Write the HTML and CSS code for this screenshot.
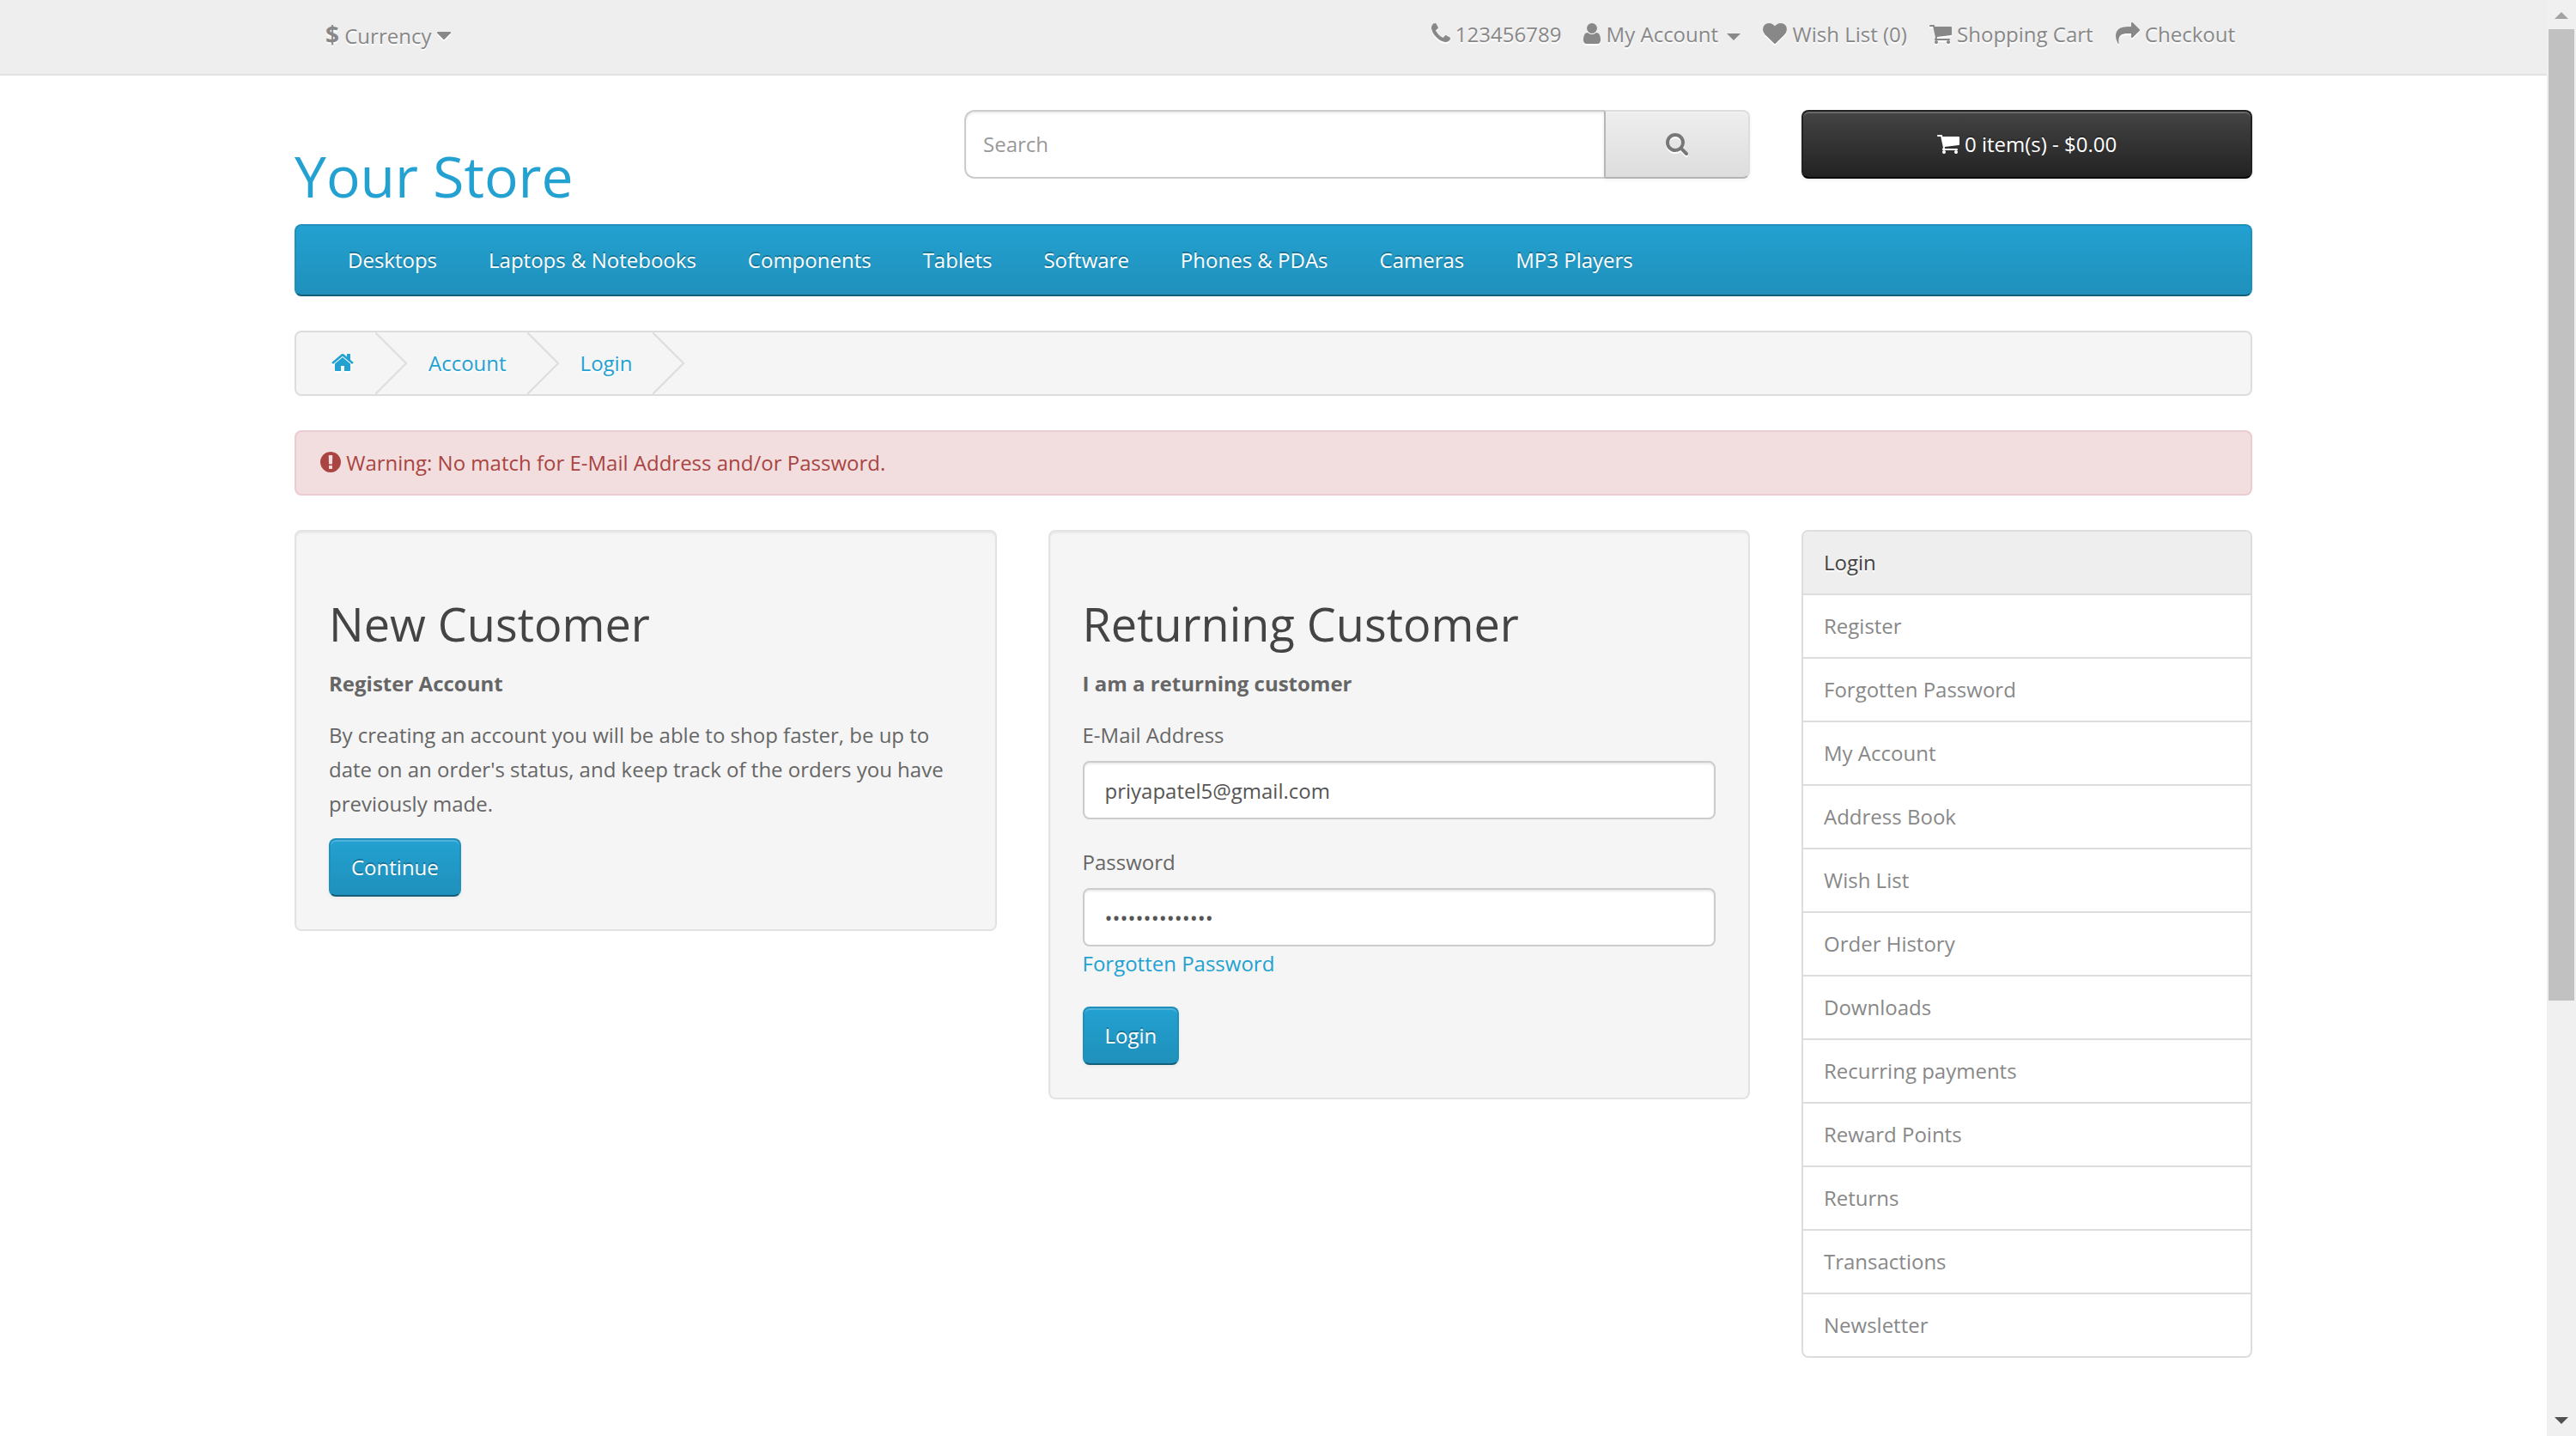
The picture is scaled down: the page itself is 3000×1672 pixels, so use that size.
FILE: index.html
```html
<!DOCTYPE html>
<html lang="en">
<head>
<meta charset="utf-8">
<title>Account Login</title>
<link rel="stylesheet" href="styles.css">
</head>
<body>
<svg class="sprite" aria-hidden="true">
  <symbol id="phone" viewBox="192 0 1408 1792"><path d="M1600 1240q0 27-10 70.5t-21 68.500q-21 50-122 106-94 51-186 51-27 0-52.500-3.500t-57.500-12.500-47.500-14.500-55.500-20.500-49-18q-98-35-175-83-128-79-264.500-215.500t-215.500-264.500q-48-77-83-175-3-9-18-49t-20.500-55.500-14.500-47.500-12.500-57.500-3.500-52.500q0-92 51-186 56-101 106-122 25-11 68.500-21t70.500-10q14 0 21 3 18 6 53 76 11 19 30 54t35 63.500 31 53.500q3 4 17.500 25t21.500 35.500 7 28.500q0 20-28.500 50t-62 55-62 53-28.500 46q0 9 5 22.500t8.500 20.500 14 24 11.500 19q76 137 174 235t235 174q2 1 19 11.500t24 14 20.500 8.500 22.500 5q18 0 46-28.500t53-62 55-62 50-28.500q14 0 28.500 7t35.500 21.500 25 17.500q25 15 53.500 31t63.500 35 54 30q70 35 76 53 3 7 3 21z"/></symbol>
  <symbol id="user" viewBox="256 0 1280 1792"><path d="M1536 1399q0 109-62.500 187t-150.500 78h-854q-88 0-150.500-78t-62.500-187q0-85 8.500-160.500t31.500-152 58.500-131 94-89 134.500-34.500q131 128 313 128t313-128q76 0 134.500 34.500t94 89 58.500 131 31.500 152 8.500 160.500zm-256-887q0 159-112.500 271.500t-271.500 112.500-271.500-112.500-112.500-271.500 112.500-271.500 271.500-112.500 271.500 112.500 112.500 271.500z"/></symbol>
  <symbol id="heart" viewBox="0 0 1792 1792"><path d="M896 1664q-26 0-44-18l-624-602q-10-8-27.500-26t-55.500-65.500-68-97.500-53.500-121-23.500-138q0-220 127-344t351-124q62 0 126.500 21.500t120 58 95.500 68.500 76 68q36-36 76-68t95.500-68.500 120-58 126.500-21.500q224 0 351 124t127 344q0 221-229 450l-623 600q-18 18-44 18z"/></symbol>
  <symbol id="cart" viewBox="64 0 1664 1792"><path d="M704 1536q0 52-38 90t-90 38-90-38-38-90 38-90 90-38 90 38 38 90zm896 0q0 52-38 90t-90 38-90-38-38-90 38-90 90-38 90 38 38 90zm128-1088v512q0 24-16.500 42.500t-40.500 21.500l-1044 122q13 60 13 70 0 16-24 64h920q26 0 45 19t19 45-19 45-45 19h-1024q-26 0-45-19t-19-45q0-11 8-31.500t16-36 21.500-40 15.500-29.500l-177-823h-204q-26 0-45-19t-19-45 19-45 45-19h256q16 0 28.500 6.500t19.500 15.500 13 24.500 8 26 5.500 29.500 4.500 26h1201q26 0 45 19t19 45z"/></symbol>
  <symbol id="share" viewBox="0 0 1792 1792"><path d="M1792 640q0 26-19 45l-512 512q-19 19-45 19t-45-19-19-45v-256h-224q-98 0-175.500 6t-154 21.500-133 42.500-105.500 69.500-80 101-48.500 138.500-17.500 181q0 55 5 123 0 6 2.500 23.500t2.500 26.500q0 15-8.500 25t-23.500 10q-16 0-28-17-7-9-13-22t-13.500-30-10.500-24q-127-285-127-451 0-199 53-333 162-403 875-403h224v-256q0-26 19-45t45-19 45 19l512 512q19 19 19 45z"/></symbol>
  <symbol id="search" viewBox="64 0 1664 1792"><path d="M1216 832q0-185-131.500-316.500t-316.500-131.500-316.500 131.500-131.500 316.500 131.500 316.500 316.500 131.500 316.500-131.500 131.500-316.500zm512 832q0 52-38 90t-90 38q-54 0-90-38l-343-342q-179 124-399 124-143 0-273.500-55.500t-225-150-150-225-55.500-273.500 55.500-273.500 150-225 225-150 273.500-55.500 273.500 55.500 225 150 150 225 55.500 273.500q0 220-124 399l343 343q37 37 37 90z"/></symbol>
  <symbol id="home" viewBox="64 0 1664 1792"><path d="M1472 992v480q0 26-19 45t-45 19h-384v-384h-256v384h-384q-26 0-45-19t-19-45v-480q0-1 .5-3t.5-3l575-474 575 474q1 2 1 6zm223-69l-62 74q-8 9-21 11h-3q-13 0-21-7l-692-577-692 577q-12 8-24 7-13-2-21-11l-62-74q-8-10-7-23.500t11-21.500l719-599q32-26 76-26t76 26l244 204v-195q0-14 9-23t23-9h192q14 0 23 9t9 23v408l219 182q10 8 11 21.500t-7 23.500z"/></symbol>
  <symbol id="warning" viewBox="128 0 1536 1792"><path d="M896 128q209 0 385.500 103t279.500 279.500 103 385.500-103 385.500-279.500 279.500-385.500 103-385.500-103-279.500-279.500-103-385.500 103-385.500 279.500-279.500 385.500-103zm128 1247v-190q0-14-9-23.500t-22-9.500h-192q-13 0-23 10t-10 23v190q0 13 10 23t23 10h192q13 0 22-9.500t9-23.500zm-2-344l18-621q0-12-10-18-10-8-24-8h-220q-14 0-24 8-10 6-10 18l18 621q0 10 10 17.500t24 7.500h185q14 0 23.500-7.500t10.500-17.500z"/></symbol>
  <symbol id="caret" viewBox="384 0 1024 1792"><path d="M1408 704q0 26-19 45l-448 448q-19 19-45 19t-45-19l-448-448q-19-19-19-45t19-45 45-19h896q26 0 45 19t19 45z"/></symbol>
</svg>

<nav class="top">
  <div class="container top-row">
    <button type="button" class="top-button currency"><strong class="sign">$</strong> Currency <svg class="icon w16"><use href="#caret"/></svg></button>
    <ul class="top-links">
      <li><a href="#"><svg class="icon w22"><use href="#phone"/></svg></a> 123456789</li>
      <li><button type="button" class="top-button"><svg class="icon w20"><use href="#user"/></svg> My Account <span class="caret"></span></button></li>
      <li><a href="#"><svg class="icon w28"><use href="#heart"/></svg> Wish List (0)</a></li>
      <li><a href="#"><svg class="icon w26"><use href="#cart"/></svg> Shopping Cart</a></li>
      <li><a href="#"><svg class="icon w28"><use href="#share"/></svg> Checkout</a></li>
    </ul>
  </div>
</nav>

<header class="container header">
  <h1 class="logo"><a href="#">Your Store</a></h1>
  <form class="search">
    <input class="search-input" type="text" placeholder="Search" aria-label="Search">
    <button class="search-button" type="button" aria-label="Search"><svg class="icon w28"><use href="#search"/></svg></button>
  </form>
  <button class="cart-button" type="button"><svg class="icon w26"><use href="#cart"/></svg> 0 item(s) - $0.00</button>
</header>

<div class="container">
  <nav class="menu">
    <a href="#">Desktops</a>
    <a href="#">Laptops &amp; Notebooks</a>
    <a href="#">Components</a>
    <a href="#">Tablets</a>
    <a href="#">Software</a>
    <a href="#">Phones &amp; PDAs</a>
    <a href="#">Cameras</a>
    <a href="#">MP3 Players</a>
  </nav>

  <ul class="breadcrumb">
    <li><a href="#" aria-label="Home"><svg class="icon w28"><use href="#home"/></svg></a><svg class="chevron" viewBox="0 0 38 72"><path d="M0 0L36 36L0 72"/></svg></li>
    <li><a href="#">Account</a><svg class="chevron" viewBox="0 0 38 72"><path d="M0 0L36 36L0 72"/></svg></li>
    <li><a href="#">Login</a><svg class="chevron" viewBox="0 0 38 72"><path d="M0 0L36 36L0 72"/></svg></li>
  </ul>

  <div class="alert" role="alert"><svg class="icon w24"><use href="#warning"/></svg> Warning: No match for E-Mail Address and/or Password.</div>

  <main class="columns">
    <section class="well">
      <h2>New Customer</h2>
      <p><strong>Register Account</strong></p>
      <p>By creating an account you will be able to shop faster, be up to date on an order's status, and keep track of the orders you have previously made.</p>
      <button class="primary" type="button">Continue</button>
    </section>

    <section class="well">
      <h2>Returning Customer</h2>
      <p><strong>I am a returning customer</strong></p>
      <form>
        <div class="group">
          <label for="email">E-Mail Address</label>
          <input class="field" id="email" type="text" value="priyapatel5@gmail.com">
        </div>
        <div class="group">
          <label for="password">Password</label>
          <input class="field" id="password" type="password" value="priyapatel5678">
          <a class="forgotten" href="#">Forgotten Password</a>
        </div>
        <button class="primary" type="button">Login</button>
      </form>
    </section>

    <aside class="list">
      <a class="active" href="#">Login</a>
      <a href="#">Register</a>
      <a href="#">Forgotten Password</a>
      <a href="#">My Account</a>
      <a href="#">Address Book</a>
      <a href="#">Wish List</a>
      <a href="#">Order History</a>
      <a href="#">Downloads</a>
      <a href="#">Recurring payments</a>
      <a href="#">Reward Points</a>
      <a href="#">Returns</a>
      <a href="#">Transactions</a>
      <a href="#">Newsletter</a>
    </aside>
  </main>
</div>

<div class="scrollbar" aria-hidden="true">
  <svg class="arrow up" viewBox="0 0 34 34"><path d="M17 14L25 22H9z"/></svg>
  <div class="track"><div class="thumb"></div></div>
  <svg class="arrow down" viewBox="0 0 34 34"><path d="M9 12H25L17 20z"/></svg>
</div>
</body>
</html>
```
FILE: styles.css
```css
* {
  box-sizing: border-box;
}

body {
  margin: 0;
  padding-right: 34px;
  background: #fff;
  color: #666;
  font: 24px/40px "Open Sans", sans-serif;
}

a {
  color: #23a1d1;
  text-decoration: none;
}

button,
input {
  font: inherit;
}

ul {
  margin: 0;
  padding: 0;
  list-style: none;
}

.sprite {
  position: absolute;
  width: 0;
  height: 0;
}

.container {
  max-width: 2340px;
  margin: 0 auto;
  padding: 0 30px;
}

.icon {
  height: 28px;
  vertical-align: -4px;
  fill: currentColor;
}

.w16 { width: 16px; }
.w20 { width: 20px; }
.w22 { width: 22px; }
.w24 { width: 24px; }
.w26 { width: 26px; }
.w28 { width: 28px; }

/* Top bar */

.top {
  min-height: 88px;
  padding-top: 20px;
  margin-bottom: 40px;
  border-bottom: 2px solid #e2e2e2;
  background: #eee;
}

.top-row {
  display: flex;
  justify-content: space-between;
  align-items: flex-start;
}

.top-links {
  display: flex;
  gap: 26px;
  padding-right: 20px;
}

.top,
.top a,
.top-button {
  color: #888;
  text-shadow: 0 2px 0 #fff;
}

.top .icon,
.breadcrumb .icon,
.search-button .icon {
  filter: drop-shadow(0 2px 0 #fff);
}

.top-button {
  padding: 0;
  border: 0;
  background: none;
}

.currency {
  padding: 0 36px;
}

.sign {
  font-size: 28px;
}

.caret {
  display: inline-block;
  margin-left: 4px;
  border: 8px solid transparent;
  border-top-color: #888;
  border-bottom: 0;
  vertical-align: middle;
}

/* Header */

.header {
  display: grid;
  grid-template-columns: 48fr 61fr 35fr;
  gap: 60px;
  align-items: start;
}

.logo {
  margin: 40px 0 20px;
  font-size: 66px;
  font-weight: 400;
  line-height: 73px;
}

.search {
  display: flex;
  height: 80px;
}

.search-input {
  flex: 1;
  min-width: 0;
  padding: 0 20px;
  border: 2px solid #ccc;
  border-right: 0;
  border-radius: 12px 0 0 12px;
  background: #fff;
  box-shadow: inset 0 2px 2px rgba(0, 0, 0, .075);
  color: #555;
}

.search-input::placeholder {
  color: #999;
}

.search-button {
  width: 170px;
  border: 2px solid;
  border-color: #ddd #ddd #b3b3b3 #b7b7b7;
  border-radius: 0 8px 8px 0;
  background: linear-gradient(#eee, #ddd);
  box-shadow: inset 0 2px 0 rgba(255, 255, 255, .2), 0 2px 4px rgba(0, 0, 0, .05);
  color: #777;
}

.cart-button {
  height: 80px;
  border: 2px solid;
  border-color: #222 #222 #000;
  border-radius: 8px;
  background: linear-gradient(#444, #222);
  box-shadow: inset 0 2px 0 rgba(255, 255, 255, .2), 0 2px 4px rgba(0, 0, 0, .05);
  color: #fff;
  text-shadow: 0 -2px 0 rgba(0, 0, 0, .25);
}

/* Menu */

.menu {
  display: flex;
  margin-bottom: 40px;
  padding: 0 30px;
  border: 2px solid;
  border-color: #1f90bb #1f90bb #145e7a;
  border-radius: 8px;
  background: linear-gradient(#23a1d1, #1f90bb);
}

.menu a {
  padding: 20px 30px;
  color: #fff;
  text-shadow: 0 -2px 0 rgba(0, 0, 0, .25);
}

/* Breadcrumb and alert */

.breadcrumb {
  display: flex;
  gap: 24px;
  margin-bottom: 40px;
  padding-left: 40px;
  border: 2px solid #ddd;
  border-radius: 8px;
  background: #f5f5f5;
  line-height: 72px;
  text-shadow: 0 2px 0 #fff;
}

.breadcrumb li {
  display: flex;
  gap: 24px;
}

.chevron {
  width: 38px;
  height: 72px;
  fill: none;
  stroke: #ddd;
  stroke-width: 2;
}

.alert {
  margin-bottom: 40px;
  padding: 16px 28px;
  border: 2px solid #ebccd1;
  border-radius: 8px;
  background: #f2dede;
  color: #a94442;
}

/* Login columns */

.columns {
  display: grid;
  grid-template-columns: 109fr 109fr 70fr;
  gap: 60px;
  align-items: start;
}

.well {
  padding: 38px;
  border: 2px solid #e3e3e3;
  border-radius: 8px;
  background: #f5f5f5;
  box-shadow: inset 0 2px 2px rgba(0, 0, 0, .05);
}

.well h2 {
  margin: 40px 0 20px;
  color: #444;
  font-size: 54px;
  font-weight: 400;
  line-height: 59px;
}

.well p {
  margin: 0 0 20px;
}

.primary {
  display: block;
  height: 68px;
  padding: 0 24px;
  border: 2px solid;
  border-color: #1f90bb #1f90bb #145e7a;
  border-radius: 8px;
  background: linear-gradient(#23a1d1, #1f90bb);
  box-shadow: inset 0 2px 0 rgba(255, 255, 255, .2), 0 2px 4px rgba(0, 0, 0, .05);
  color: #fff;
  text-shadow: 0 -2px 0 rgba(0, 0, 0, .25);
}

.group {
  margin-bottom: 30px;
}

.group label {
  display: block;
  margin-bottom: 10px;
}

.field {
  display: block;
  width: 100%;
  height: 68px;
  padding: 0 24px;
  border: 2px solid #ccc;
  border-radius: 8px;
  background: #fff;
  box-shadow: inset 0 2px 2px rgba(0, 0, 0, .075);
  color: #555;
}

.forgotten {
  display: block;
}

.list {
  border: 2px solid #ddd;
  border-radius: 8px;
  overflow: hidden;
}

.list a {
  display: block;
  padding: 16px 24px;
  color: #888;
}

.list a + a {
  border-top: 2px solid #ddd;
}

.list .active {
  background: #eee;
  color: #444;
  text-shadow: 0 2px 0 #fff;
}

/* Window scrollbar */

.scrollbar {
  position: fixed;
  top: 0;
  right: 0;
  bottom: 0;
  display: flex;
  flex-direction: column;
  width: 34px;
  padding: 0 2px;
  background: #f0f0f0;
}

.arrow {
  width: 34px;
  height: 34px;
  margin: 0 -2px;
}

.up { fill: #a3a3a3; }
.down { fill: #505050; }

.track {
  flex: 1;
}

.thumb {
  height: 70.5%;
  background: #c1c1c1;
}
```
